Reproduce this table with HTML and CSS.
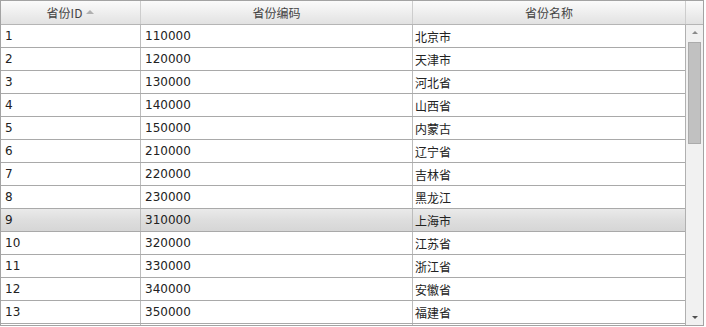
FILE: index.html
```html
<!DOCTYPE html>
<html>
<head>
  <title>省份列表</title>
  <link rel="stylesheet" href="styles.css">
</head>
<body>
  <div class="grid">
    <div class="grid-head">
      <div class="hcell">省份ID <span class="sort-up"></span></div>
      <div class="hcell">省份编码</div>
      <div class="hcell">省份名称</div>
      <div class="hcell hcell-end"></div>
    </div>
    <div class="grid-body">
      <div class="rows">
        <div class="row"><div class="cell">1</div><div class="cell">110000</div><div class="cell">北京市</div></div>
        <div class="row"><div class="cell">2</div><div class="cell">120000</div><div class="cell">天津市</div></div>
        <div class="row"><div class="cell">3</div><div class="cell">130000</div><div class="cell">河北省</div></div>
        <div class="row"><div class="cell">4</div><div class="cell">140000</div><div class="cell">山西省</div></div>
        <div class="row"><div class="cell">5</div><div class="cell">150000</div><div class="cell">内蒙古</div></div>
        <div class="row"><div class="cell">6</div><div class="cell">210000</div><div class="cell">辽宁省</div></div>
        <div class="row"><div class="cell">7</div><div class="cell">220000</div><div class="cell">吉林省</div></div>
        <div class="row"><div class="cell">8</div><div class="cell">230000</div><div class="cell">黑龙江</div></div>
        <div class="row selected"><div class="cell">9</div><div class="cell">310000</div><div class="cell">上海市</div></div>
        <div class="row"><div class="cell">10</div><div class="cell">320000</div><div class="cell">江苏省</div></div>
        <div class="row"><div class="cell">11</div><div class="cell">330000</div><div class="cell">浙江省</div></div>
        <div class="row"><div class="cell">12</div><div class="cell">340000</div><div class="cell">安徽省</div></div>
        <div class="row"><div class="cell">13</div><div class="cell">350000</div><div class="cell">福建省</div></div>
        <div class="row"><div class="cell"></div><div class="cell"></div><div class="cell"></div></div>
      </div>
      <div class="scrollbar">
        <div class="sb-btn"><span class="arrow-up"></span></div>
        <div class="sb-track"><div class="sb-thumb"></div></div>
        <div class="sb-btn"><span class="arrow-down"></span></div>
      </div>
    </div>
  </div>
</body>
</html>
```

FILE: styles.css
```css
body {
  margin: 0;
  background-color: #fff;
  font-family: "DejaVu Sans", Verdana, "Noto Sans CJK SC", sans-serif;
  font-size: 12px;
  color: #222;
}

.grid {
  width: 704px;
  box-sizing: border-box;
  border: 1px solid #a3a3a3;
}

.grid-head {
  display: grid;
  grid-template-columns: 140px 272px 273px 1fr;
  height: 24px;
  border-bottom: 1px solid #b5b5b5;
  background: linear-gradient(#fbfbfb, #ececec 60%, #e2e2e2);
  box-sizing: border-box;
}

.hcell {
  display: flex;
  align-items: center;
  justify-content: center;
  border-right: 1px solid #cdcdcd;
  color: #444;
  font-family: "Noto Sans CJK SC", "DejaVu Sans", sans-serif;
  font-size: 12px;
}

.hcell-end {
  border-right: none;
}

.sort-up {
  display: inline-block;
  width: 0;
  height: 0;
  margin-left: 4px;
  margin-bottom: 2px;
  border-left: 4px solid transparent;
  border-right: 4px solid transparent;
  border-bottom: 4px solid #b0b0b0;
}

.grid-body {
  display: flex;
  height: 300px;
  overflow: hidden;
}

.rows {
  width: 685px;
  border-right: 1px solid #b0b0b0;
  box-sizing: border-box;
}

.row {
  display: grid;
  grid-template-columns: 140px 272px 1fr;
  height: 23px;
  box-sizing: border-box;
  border-bottom: 1px solid #a9a9a9;
}

.row.selected {
  background: linear-gradient(#eaeaea, #dedede 50%, #d6d6d6);
}

.cell {
  display: flex;
  align-items: center;
  padding-left: 4px;
  border-right: 1px solid #bcbcbc;
  font-family: "DejaVu Sans", "Noto Sans CJK SC", sans-serif;
}

.cell:last-child {
  border-right: none;
  padding-left: 2px;
}

.scrollbar {
  flex: 1;
  display: flex;
  flex-direction: column;
  background-color: #f1f1f1;
}

.sb-btn {
  height: 15px;
  display: flex;
  align-items: center;
  justify-content: center;
}

.arrow-up,
.arrow-down {
  width: 0;
  height: 0;
  border-left: 3px solid transparent;
  border-right: 3px solid transparent;
}

.arrow-up {
  border-bottom: 3px solid #8a8a8a;
}

.arrow-down {
  border-top: 3px solid #505050;
}

.sb-track {
  flex: 1;
  padding: 2px 2px 0;
}

.sb-thumb {
  height: 102px;
  background-color: #c1c1c1;
  border: 1px solid #ababab;
  box-sizing: border-box;
}
```
